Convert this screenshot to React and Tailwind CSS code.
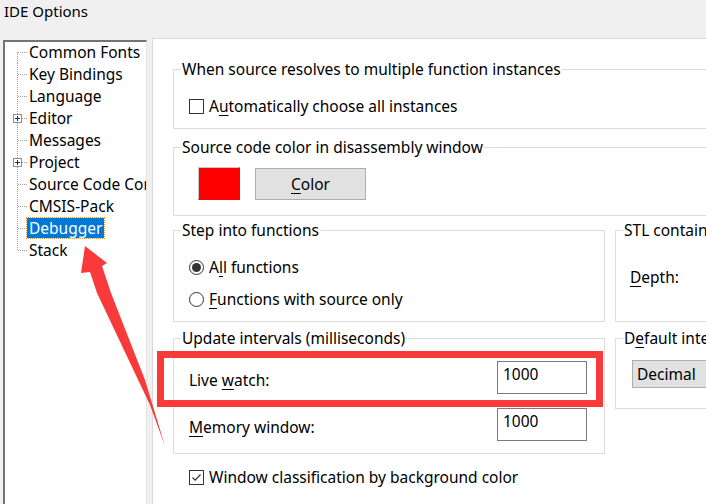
import React from "react";

const treeItems = [
  { label: "Common Fonts" },
  { label: "Key Bindings" },
  { label: "Language" },
  { label: "Editor", expandable: true },
  { label: "Messages" },
  { label: "Project", expandable: true },
  { label: "Source Code Control" },
  { label: "CMSIS-Pack" },
  { label: "Debugger", selected: true },
  { label: "Stack" },
];

// Dotted connector drawn on the left of each tree row
const TreeConnector = ({ first, last, expandable }) => (
  <svg width="22" height="22" className="shrink-0">
    <line
      x1="12.5"
      x2="12.5"
      y1={first ? 11 : 0}
      y2={last ? 12 : 22}
      stroke="#a0a0a0"
      strokeDasharray="1 1"
    />
    <line x1="13" x2="22" y1="11.5" y2="11.5" stroke="#a0a0a0" strokeDasharray="1 1" />
    {expandable && (
      <g>
        <rect x="8.5" y="7.5" width="8" height="8" fill="#fff" stroke="#919191" />
        <line x1="10" x2="15" y1="11.5" y2="11.5" stroke="#1f2d66" />
        <line x1="12.5" x2="12.5" y1="9" y2="14" stroke="#1f2d66" />
      </g>
    )}
  </svg>
);

const U = ({ children }) => <span className="underline underline-offset-[3px]">{children}</span>;

const Checkbox = ({ checked }) => (
  <div className="flex h-[15px] w-[15px] shrink-0 items-center justify-center border border-[#333333] bg-white">
    {checked && (
      <svg width="11" height="11" viewBox="0 0 11 11">
        <polyline points="1.5,5.5 4.2,8.2 9.5,2.5" fill="none" stroke="#333" strokeWidth="1.2" />
      </svg>
    )}
  </div>
);

const Radio = ({ checked }) => (
  <div className="flex h-[15px] w-[15px] shrink-0 items-center justify-center rounded-full border border-[#333333] bg-white">
    {checked && <div className="h-[9px] w-[9px] rounded-full bg-[#333333]" />}
  </div>
);

const Legend = ({ children }) => (
  <legend className="ml-[7px] px-[1px] leading-[20px] whitespace-nowrap">{children}</legend>
);

const App = () => {
  return (
    <div className="relative h-[504px] w-[706px] overflow-hidden bg-[#f0f0f0] font-['Noto_Sans','Liberation_Sans',sans-serif] text-[15.5px] text-black">
      {/* Title */}
      <div className="h-[38px] pl-[4px] text-[15px] leading-[22px]">IDE Options</div>

      <div className="flex items-start">
        {/* Tree */}
        <div className="mt-[2px] ml-[3px] h-[470px] w-[144px] shrink-0 overflow-hidden border-t-2 border-l-2 border-r border-t-[#747474] border-l-[#747474] border-r-[#e3e3e3] bg-white">
          <div className="-mt-[1px]">
            {treeItems.map((item, i) => (
              <div key={item.label} className="flex h-[22px] items-center whitespace-nowrap">
                <TreeConnector first={i === 0} last={i === treeItems.length - 1} expandable={item.expandable} />
                <span
                  className={
                    item.selected
                      ? "bg-[#0078d7] px-[2px] leading-[20px] text-white outline outline-1 outline-dotted outline-[#e89a3c]"
                      : "px-[2px] leading-[20px]"
                  }
                >
                  {item.label}
                </span>
              </div>
            ))}
          </div>
        </div>

        {/* Options panel */}
        <div className="ml-[5px] h-[466px] w-[600px] shrink-0 border-t border-l border-[#dadada] bg-white pl-[20px]">
          <fieldset className="mt-[20px] w-[560px] min-w-0 border border-[#dcdcdc] pb-[12px]">
            <Legend>When source resolves to multiple function instances</Legend>
            <div className="mt-[17px] ml-[15px] flex h-[20px] items-center gap-[5px]">
              <Checkbox />
              <span className="leading-[20px]">
                A<U>u</U>tomatically choose all instances
              </span>
            </div>
          </fieldset>

          <fieldset className="mt-[8px] w-[560px] min-w-0 border border-[#dcdcdc] pb-[15px]">
            <Legend>Source code color in disassembly window</Legend>
            <div className="mt-[10px] ml-[24px] flex items-start gap-[15px]">
              <div className="h-[33px] w-[42px] border border-t-[#c8c8c8] border-l-[#c8c8c8] border-r-[#ff0000] border-b-[#ff0000] bg-[#ff0000]" />
              <button className="mt-[1px] flex h-[32px] w-[111px] items-center justify-center border border-[#adadad] bg-[#e1e1e1] leading-[20px]">
                <U>C</U>olor
              </button>
            </div>
          </fieldset>

          <div className="mt-[4px] flex gap-[10px]">
            <fieldset className="w-[432px] min-w-0 shrink-0 border border-[#dcdcdc] pb-[12px]">
              <Legend>Step into functions</Legend>
              <div className="mt-[17px] ml-[15px] flex h-[20px] items-center gap-[5px]">
                <Radio checked />
                <span className="leading-[20px]">
                  A<U>l</U>l functions
                </span>
              </div>
              <div className="mt-[12px] ml-[15px] flex h-[20px] items-center gap-[5px]">
                <Radio />
                <span className="leading-[20px]">
                  <U>F</U>unctions with source only
                </span>
              </div>
            </fieldset>
            <fieldset className="w-[200px] min-w-0 shrink-0 border border-[#dcdcdc]">
              <Legend>STL containers</Legend>
              <div className="mt-[27px] ml-[14px] leading-[20px]">
                <U>D</U>epth:
              </div>
            </fieldset>
          </div>

          <div className="mt-[6px] flex items-start gap-[10px]">
            <fieldset className="w-[432px] min-w-0 shrink-0 border border-[#dcdcdc] pb-[12px] pr-[17px]">
              <Legend>Update intervals (milliseconds)</Legend>
              <div className="mt-[13px] ml-[15px] flex items-start justify-between">
                <span className="pt-[9px] leading-[20px]">
                  Live <U>w</U>atch:
                </span>
                <div className="h-[33px] w-[90px] border border-[#7a7a7a] bg-white pt-[2px] pl-[5px] leading-[20px]">1000</div>
              </div>
              <div className="mt-[14px] ml-[15px] flex items-start justify-between">
                <span className="pt-[9px] leading-[20px]">
                  <U>M</U>emory window:
                </span>
                <div className="h-[33px] w-[90px] border border-[#7a7a7a] bg-white pt-[2px] pl-[5px] leading-[20px]">1000</div>
              </div>
            </fieldset>
            <fieldset className="w-[200px] min-w-0 shrink-0 border border-[#dcdcdc] pb-[20px]">
              <Legend>
                D<U>e</U>fault integer format
              </Legend>
              <div className="mt-[12px] ml-[16px] flex h-[28px] w-[160px] items-center border border-[#adadad] bg-[#e1e1e1] pl-[4px] leading-[20px]">
                Decimal
              </div>
            </fieldset>
          </div>

          <div className="mt-[13px] ml-[16px] flex h-[20px] items-center gap-[5px]">
            <Checkbox checked />
            <span className="leading-[20px]">Window classification by background color</span>
          </div>
        </div>
      </div>

      {/* Annotation: highlight box */}
      <div className="pointer-events-none absolute top-[351px] left-[157px] h-[56px] w-[446px] border-[7px] border-[#f93a3a]" />

      {/* Annotation: arrow */}
      <svg className="pointer-events-none absolute inset-0" width="706" height="504">
        <polygon
          points="85,246 107,263 102,266 111,293 145,380 165,446 150,405 97,293 90,272 81,273"
          fill="#f93a3a"
        />
      </svg>
    </div>
  );
};

export default App;
